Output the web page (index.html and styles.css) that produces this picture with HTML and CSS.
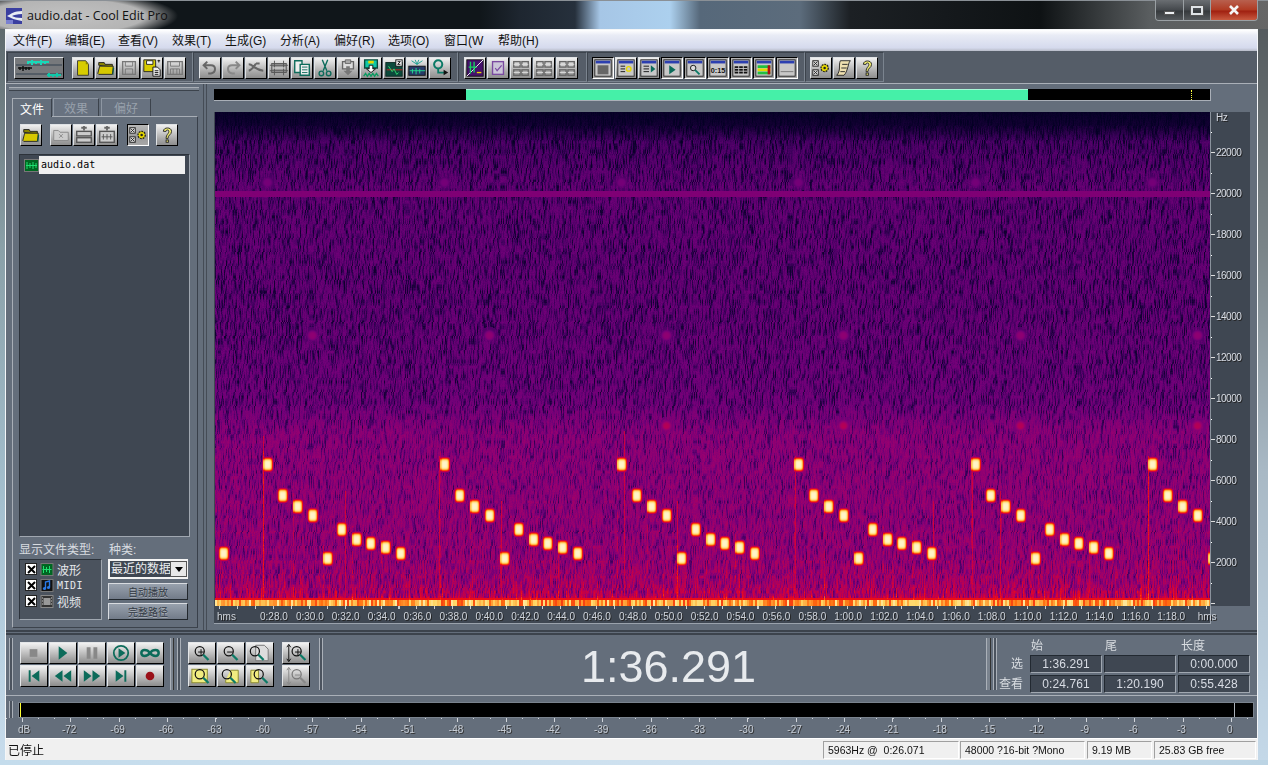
FILE: index.html
```html
<!DOCTYPE html>
<html lang="zh">
<head>
<meta charset="utf-8">
<title>audio.dat - Cool Edit Pro</title>
<link rel="stylesheet" href="styles.css">
</head>
<body>
<svg class="defs" width="0" height="0">
  <defs>
    <symbol id="mag" viewBox="0 0 22 22"><circle cx="9" cy="9" r="5.2" fill="none" stroke="#111" stroke-width="1.4"/><path d="M13 13l6 6" stroke="#0c7a66" stroke-width="2.6"/></symbol>
    <symbol id="maggray" viewBox="0 0 22 22"><circle cx="9" cy="9" r="5.2" fill="none" stroke="#777" stroke-width="1.4"/><path d="M13 13l6 6" stroke="#888" stroke-width="2.6"/></symbol>
    <symbol id="win" viewBox="0 0 22 22"><rect x="2" y="2" width="18" height="18" fill="#c8c8c8" stroke="#222"/><rect x="3" y="3" width="16" height="3" fill="#2c3fb0"/></symbol>
    <symbol id="grid" viewBox="0 0 22 22"><g fill="none" stroke="#666" stroke-width="1.5"><rect x="3" y="4" width="7" height="6"/><rect x="12" y="4" width="7" height="6"/><rect x="3" y="13" width="7" height="6"/><rect x="12" y="13" width="7" height="6"/></g><path d="M3 7h7M12 7h7M3 16h7M12 16h7" stroke="#ddd"/></symbol>
    <symbol id="gear" viewBox="0 0 22 22"><rect x="2" y="3" width="6" height="6" fill="#ddd" stroke="#222"/><path d="M3 4l4 4M7 4l-4 4" stroke="#222"/><rect x="2" y="13" width="6" height="6" fill="#ddd" stroke="#222"/><path d="M3 14l4 4M7 14l-4 4" stroke="#222"/><circle cx="15" cy="11" r="4" fill="#e6d800" stroke="#222" stroke-width="1.5" stroke-dasharray="2 1"/><circle cx="15" cy="11" r="1.4" fill="#222"/></symbol>
    <symbol id="help" viewBox="0 0 22 22"><path d="M7 7c0-5 9-5 9 0 0 4-4 3.500-4 8h-2c0-5 3-5 3-8 0-2-3-2-3 0z" fill="#f0ec70" stroke="#222"/><rect x="10" y="16.500" width="2.500" height="2.500" fill="#f0ec70" stroke="#222"/></symbol>
    <symbol id="folder" viewBox="0 0 22 22"><path d="M3 8V5h6l1 2h8v3z" fill="#8a8400" stroke="#222"/><path d="M2 17l2-8h15l-1 9H3z" fill="#d6c800" stroke="#222"/><path d="M18 18l1-8 1 1-1 8z" fill="#0c5a4a"/></symbol>
  </defs>
</svg>
<div class="screen">
  <header class="title">
    <svg class="appicon" width="16" height="16" viewBox="0 0 16 16"><rect width="16" height="16" fill="#3a3fa0"/><path d="M16 3C8 3 5 6 1 8c4 2 8 4 15 5v-3C11 10 8 9 6 8c2-1 5-2 10-2z" fill="#e8ecf4"/><rect y="12" width="7" height="4" fill="#7a80d0"/></svg>
    <span class="title-text">audio.dat - Cool Edit Pro</span>
    <div class="caption">
      <span class="cap cap-min"><i class="glyph-min"></i></span>
      <span class="cap cap-max"><i class="glyph-max"></i></span>
      <span class="cap cap-close"><svg width="12" height="10" viewBox="0 0 12 10"><path d="M2 1l8 8M10 1L2 9" stroke="#f4f4f4" stroke-width="2.600"/></svg></span>
    </div>
  </header>
  <div class="middle">
    <div class="edge-left"></div>
    <div class="client">
      <nav class="menu">
        <span>文件(F)</span><span>编辑(E)</span><span>查看(V)</span><span>效果(T)</span><span>生成(G)</span><span>分析(A)</span><span>偏好(R)</span><span>选项(O)</span><span>窗口(W</span><span>帮助(H)</span>
      </nav>
      <div class="toolbar">
        <div class="tg tg1">
          <button class="btn big"><svg width="48" height="20" viewBox="0 0 48 20"><rect width="48" height="20" fill="#77797c"/><path d="M1 7h46M1 16h46" stroke="#33414f"/><path d="M12 4h22M13 3v3M17 2v5M21 3v3M26 2v5M30 3v3" stroke="#19d8b8" stroke-width="2"/><path d="M3 10h14M5 9v3M8 8v5M11 9v3M14 9v3" stroke="#111" stroke-width="1.500"/><path d="M32 17h14M34 15v4M38 16v3M42 15v4" stroke="#10c8a8" stroke-width="2"/></svg></button>
          <div class="set">
            <button class="btn"><svg viewBox="0 0 22 22"><path d="M5 3h9l3 4v12H5z" fill="#d8cc00" stroke="#333"/><path d="M14 3v4h3z" fill="#8a8400"/></svg></button>
            <button class="btn"><svg><use href="#folder"/></svg></button>
            <button class="btn"><svg viewBox="0 0 22 22"><path d="M4 4h14v14H4z" fill="none" stroke="#777" stroke-width="1.500"/><path d="M7 4h8v5H7zM7 12h8v6H7z" fill="none" stroke="#777"/></svg></button>
            <button class="btn"><svg viewBox="0 0 22 22"><path d="M2 2h13v13H2z" fill="#d8cc00" stroke="#222"/><path d="M5 3h7v4H5z" fill="#fff" stroke="#222"/><path d="M12 10h5l3 3v7h-8z" fill="#eee" stroke="#111"/><path d="M14 14h4M14 16h4M14 18h4" stroke="#111"/><path d="M17 3h3M18.500 2v3" stroke="#111"/></svg></button>
            <button class="btn"><svg viewBox="0 0 22 22"><path d="M3 4h16v14H3z" fill="none" stroke="#777" stroke-width="1.500"/><path d="M6 4v5h10V4M6 18v-6h10v6M9 12v6M13 12v6" fill="none" stroke="#777"/></svg></button>
          </div>
        </div>
        <div class="tg tg2">
          <div class="set">
            <button class="btn"><svg viewBox="0 0 22 22"><path d="M8 4L4 8l4 4M4 8h8c6 0 6 8 0 9H9" fill="none" stroke="#666" stroke-width="2.200"/></svg></button>
            <button class="btn"><svg viewBox="0 0 22 22"><path d="M14 4l4 4-4 4M18 8h-8c-6 0-6 8 0 9h3" fill="none" stroke="#888" stroke-width="2.200"/></svg></button>
            <button class="btn"><svg viewBox="0 0 22 22"><path d="M3 7c5 0 6 6 16 7M3 14c4-1 6-5 8-8M11 6l4 0" fill="none" stroke="#666" stroke-width="2.200"/></svg></button>
            <button class="btn"><svg viewBox="0 0 22 22"><rect x="3" y="6" width="16" height="10" fill="#999" stroke="#555"/><path d="M6 3v16M16 3v16M1 8h20M1 14h20" stroke="#555"/><path d="M4 11h14" stroke="#eee"/></svg></button>
            <button class="btn"><svg viewBox="0 0 22 22"><path d="M3 3h8v13H3z" fill="#eee" stroke="#0c6b5a" stroke-width="1.500"/><path d="M9 7h10v12H9z" fill="#eee" stroke="#0c6b5a" stroke-width="1.500"/><path d="M11 10h6M11 13h6M11 16h6" stroke="#0c6b5a"/></svg></button>
            <button class="btn"><svg viewBox="0 0 22 22"><path d="M8 2l5 12M14 2L9 14" stroke="#0c6b5a" stroke-width="1.500"/><circle cx="7" cy="17" r="2.500" fill="none" stroke="#0c6b5a" stroke-width="1.500"/><circle cx="15" cy="17" r="2.500" fill="none" stroke="#0c6b5a" stroke-width="1.500"/></svg></button>
            <button class="btn"><svg viewBox="0 0 22 22"><path d="M5 4h12v8H5z" fill="#ddd" stroke="#666" stroke-width="1.500"/><path d="M8 2h6v4H8z" fill="#aaa" stroke="#666"/><path d="M9 9h4v5h3l-5 5-5-5h3z" fill="#777"/></svg></button>
            <button class="btn"><svg viewBox="0 0 22 22"><path d="M4 2h14v9H4z" fill="#0fc8a8" stroke="#0b4a3c" stroke-width="1.500"/><path d="M8 3h6v3H8z" fill="#e6d800"/><path d="M9 8h4v4h3l-5 4-5-4h3z" fill="#fff" stroke="#111"/><path d="M3 20l2-3 2 3 2-3 2 3 2-3 2 3 2-3 2 3" stroke="#0a9a60" fill="none" stroke-width="1.500"/></svg></button>
            <button class="btn"><svg viewBox="0 0 22 22"><rect x="2" y="5" width="18" height="15" fill="#0b4a3c" stroke="#0b2a24"/><path d="M3 13h17" stroke="#d02020"/><path d="M5 9l4 6 2-3 3 6 2-2" fill="none" stroke="#2fe070"/><rect x="13" y="2" width="7" height="7" fill="#eee" stroke="#111"/><path d="M15 4h3l-3 3h3" fill="none" stroke="#111"/></svg></button>
            <button class="btn"><svg viewBox="0 0 22 22"><rect x="2" y="9" width="18" height="10" fill="#263a68" stroke="#111"/><path d="M3 14h17M6 12v5M10 11v7M14 12v5" stroke="#22e090"/><path d="M9 2l2 5M13 2l-2 5M5 3l6 4M17 3l-6 4" stroke="#18a090"/></svg></button>
            <button class="btn"><svg viewBox="0 0 22 22"><circle cx="9" cy="7" r="4.500" fill="none" stroke="#0c7a66" stroke-width="2.200"/><path d="M9 12v4h8" fill="none" stroke="#0c7a66" stroke-width="2"/><path d="M15 13l5 3-5 3z" fill="#111"/></svg></button>
          </div>
        </div>
        <div class="tg tg3">
          <div class="set">
            <button class="btn"><svg viewBox="0 0 22 22"><rect x="2" y="2" width="18" height="18" fill="#46106c" stroke="#111"/><path d="M2 20L20 2" stroke="#fff"/><path d="M6 4v13M10 4v12M4 10h9" stroke="#14d060" stroke-width="1.500"/><path d="M13 16h5" stroke="#e6d800" stroke-width="1.500"/></svg></button>
            <button class="btn"><svg viewBox="0 0 22 22"><rect x="5" y="4" width="12" height="14" fill="#cbc6d8" stroke="#7a4aa0" stroke-width="1.500"/><path d="M8 11l2 3 5-6" stroke="#7a4aa0" fill="none" stroke-width="1.300"/></svg></button>
            <button class="btn"><svg><use href="#grid"/></svg></button>
            <button class="btn"><svg><use href="#grid"/></svg></button>
            <button class="btn"><svg><use href="#grid"/></svg></button>
          </div>
        </div>
        <div class="tg tg4">
          <div class="set">
            <button class="btn on"><svg viewBox="0 0 22 22"><use href="#win" width="22" height="22"/><path d="M5 8h12v10H5z" fill="#666"/></svg></button>
            <button class="btn"><svg viewBox="0 0 22 22"><use href="#win" width="22" height="22"/><path d="M5 9h5M5 12h5M5 15h5" stroke="#111"/><circle cx="14" cy="12" r="2.500" fill="none" stroke="#e6d800" stroke-width="1.500"/></svg></button>
            <button class="btn"><svg viewBox="0 0 22 22"><use href="#win" width="22" height="22"/><path d="M5 9h6M5 12h6M5 15h6" stroke="#111"/><path d="M13 8l5 4-5 4z" fill="#0c6b5a"/></svg></button>
            <button class="btn on"><svg viewBox="0 0 22 22"><use href="#win" width="22" height="22"/><path d="M8 8l7 5-7 5z" fill="#0c6b5a"/></svg></button>
            <button class="btn on"><svg viewBox="0 0 22 22"><use href="#win" width="22" height="22"/><circle cx="9" cy="11" r="3" fill="#ddd" stroke="#111"/><path d="M11 13l5 5" stroke="#0c7a66" stroke-width="2"/></svg></button>
            <button class="btn on"><svg viewBox="0 0 22 22"><use href="#win" width="22" height="22"/><text x="11" y="17" class="svgt">0:15</text></svg></button>
            <button class="btn on"><svg viewBox="0 0 22 22"><use href="#win" width="22" height="22"/><path d="M4 9h4v8H4zM9 9h4v8H9zM14 9h4v8h-4z" fill="#111"/><path d="M4 11.500h14M4 14.500h14" stroke="#ccc"/></svg></button>
            <button class="btn on"><svg viewBox="0 0 22 22"><use href="#win" width="22" height="22"/><rect x="4" y="8" width="14" height="3" fill="#20c040"/><rect x="4" y="11.500" width="14" height="3" fill="#e6d800"/><rect x="4" y="15" width="14" height="3" fill="#20c040"/><path d="M15 8h3v10h-3z" fill="#b01010"/></svg></button>
            <button class="btn on"><svg viewBox="0 0 22 22"><use href="#win" width="22" height="22"/><path d="M4 15h14" stroke="#777"/></svg></button>
          </div>
        </div>
        <div class="tg tg5">
          <div class="set">
            <button class="btn"><svg><use href="#gear"/></svg></button>
            <button class="btn"><svg viewBox="0 0 22 22"><path d="M7 3h11c-2 2-2 5-3 8s-2 6-4 8H3c2-2 3-5 3-8s0-6 1-8z" fill="#efe0b0" stroke="#222"/><path d="M9 7h6M8 11h6M7 15h5" stroke="#222"/></svg></button>
            <button class="btn"><svg><use href="#help"/></svg></button>
          </div>
        </div>
      </div>
      <div class="main">
        <aside class="left">
          <div class="hgrip"></div>
          <div class="tabs">
            <span class="tab tab-on">文件</span><span class="tab tab-b">效果</span><span class="tab tab-c">偏好</span>
          </div>
          <div class="panel">
            <div class="panel-tools">
              <button class="btn"><svg><use href="#folder"/></svg></button>
              <div class="set ml8">
                <button class="btn"><svg viewBox="0 0 22 22"><path d="M3 17V6h5l2 2h9v9z" fill="#ccc" stroke="#888"/><path d="M9 10l4 4M13 10l-4 4" stroke="#888"/></svg></button>
                <button class="btn"><svg viewBox="0 0 22 22"><path d="M8 3h6M11 1v5" stroke="#666" stroke-width="2"/><rect x="3" y="7" width="16" height="5" fill="#ccc" stroke="#555" stroke-width="1.500"/><rect x="3" y="14" width="16" height="5" fill="#ccc" stroke="#555" stroke-width="1.500"/></svg></button>
                <button class="btn"><svg viewBox="0 0 22 22"><path d="M8 3h6M11 1v5" stroke="#666" stroke-width="2"/><rect x="3" y="7" width="16" height="12" fill="#ccc" stroke="#555" stroke-width="1.500"/><path d="M5 13h12M7 10v6M11 10v6M15 10v6" stroke="#555"/></svg></button>
              </div>
              <button class="btn on ml9"><svg><use href="#gear"/></svg></button>
              <button class="btn ml7"><svg><use href="#help"/></svg></button>
            </div>
            <div class="filelist">
              <div class="file">
                <svg class="wave" width="15" height="13" viewBox="0 0 15 13"><rect x=".5" y=".5" width="14" height="12" fill="#062" stroke="#777"/><path d="M2 6.500h11M3 3v7M6 4v5M9 3v7M12 4v5" stroke="#1ee070"/></svg>
                <span class="file-name">audio.dat</span>
              </div>
            </div>
            <div class="type-labels"><span class="lab-a">显示文件类型:</span><span>种类:</span></div>
            <div class="types">
              <div class="typebox">
                <div class="trow"><span class="chk"><svg width="9" height="9" viewBox="0 0 9 9"><path d="M1 1l7 7M8 1L1 8" stroke="#000" stroke-width="2"/></svg></span><svg class="ficon" width="14" height="13" viewBox="0 0 13 13"><rect x=".5" y=".5" width="12" height="12" fill="#062" stroke="#777"/><path d="M2 6.500h9M3 3v7M6 4v5M9 3v7" stroke="#1ee070"/></svg><span class="tname">波形</span></div>
                <div class="trow"><span class="chk"><svg width="9" height="9" viewBox="0 0 9 9"><path d="M1 1l7 7M8 1L1 8" stroke="#000" stroke-width="2"/></svg></span><svg class="ficon" width="14" height="13" viewBox="0 0 13 13"><rect x=".5" y=".5" width="12" height="12" fill="#111" stroke="#777"/><path d="M5 9V3l4-1v6" fill="none" stroke="#2a7ae8" stroke-width="1.400"/><circle cx="4" cy="9.500" r="1.600" fill="#2a7ae8"/><circle cx="8" cy="8.500" r="1.600" fill="#2a7ae8"/></svg><span class="tname mono">MIDI</span></div>
                <div class="trow"><span class="chk"><svg width="9" height="9" viewBox="0 0 9 9"><path d="M1 1l7 7M8 1L1 8" stroke="#000" stroke-width="2"/></svg></span><svg class="ficon" width="14" height="13" viewBox="0 0 13 13"><rect x=".5" y=".5" width="12" height="12" fill="#333" stroke="#888"/><rect x="3" y="3" width="7" height="7" fill="#999"/><path d="M1.500 3h1M1.500 6h1M1.500 9h1M10.500 3h1M10.500 6h1M10.500 9h1" stroke="#ccc"/></svg><span class="tname">视频</span></div>
              </div>
              <div class="typeside">
                <div class="combo"><span class="combo-text">最近的数据</span><span class="combo-btn"><i class="arrow"></i></span></div>
                <button class="plain">自动播放</button>
                <button class="plain">完整路径</button>
              </div>
            </div>
          </div>
        </aside>
        <section class="center">
          <div class="overview"><div class="ov-green"></div><div class="ov-mark"></div></div>
          <div class="specrow">
            <canvas id="spec" class="spec" width="995" height="494"></canvas>
            <div class="hz">
              <span class="hz-top">Hz</span>
              <span>22000</span><span>20000</span><span>18000</span><span>16000</span><span>14000</span><span>12000</span><span>10000</span><span>8000</span><span>6000</span><span>4000</span><span>2000</span>
            </div>
          </div>
          <div class="timeruler">
            <span class="hms">hms</span><span>0:28.0</span><span>0:30.0</span><span>0:32.0</span><span>0:34.0</span><span>0:36.0</span><span>0:38.0</span><span>0:40.0</span><span>0:42.0</span><span>0:44.0</span><span>0:46.0</span><span>0:48.0</span><span>0:50.0</span><span>0:52.0</span><span>0:54.0</span><span>0:56.0</span><span>0:58.0</span><span>1:00.0</span><span>1:02.0</span><span>1:04.0</span><span>1:06.0</span><span>1:08.0</span><span>1:10.0</span><span>1:12.0</span><span>1:14.0</span><span>1:16.0</span><span>1:18.0</span><span>hms</span>
          </div>
        </section>
      </div>
      <div class="transport">
        <div class="ctl ctl1">
          <div class="vgrip"></div>
          <div class="keys">
            <button class="key"><svg viewBox="0 0 27 20"><rect x="9" y="6" width="8" height="8" fill="#888"/></svg></button>
            <button class="key"><svg viewBox="0 0 27 20"><path d="M9 3l9 7-9 7z" fill="#0c6b5a"/></svg></button>
            <button class="key"><svg viewBox="0 0 27 20"><path d="M8 4h4v12H8zM15 4h4v12h-4z" fill="#888"/></svg></button>
            <button class="key"><svg viewBox="0 0 27 20"><circle cx="13.500" cy="10" r="7.500" fill="none" stroke="#0c6b5a" stroke-width="1.800"/><path d="M11 5l7 5-7 5z" fill="#0c6b5a"/></svg></button>
            <button class="key"><svg viewBox="0 0 27 20"><path d="M13.500 10c-3-4-9-4-9 0s6 4 9 0 9-4 9 0-6 4-9 0z" fill="none" stroke="#0c6b5a" stroke-width="2.600"/></svg></button>
            <button class="key"><svg viewBox="0 0 27 20"><path d="M8 4h2v12H8zM19 4l-8 6 8 6z" fill="#0c6b5a"/></svg></button>
            <button class="key"><svg viewBox="0 0 27 20"><path d="M13 4l-8 6 8 6zM22 4l-8 6 8 6z" fill="#0c6b5a"/></svg></button>
            <button class="key"><svg viewBox="0 0 27 20"><path d="M5 4l8 6-8 6zM14 4l8 6-8 6z" fill="#0c6b5a"/></svg></button>
            <button class="key"><svg viewBox="0 0 27 20"><path d="M8 4l8 6-8 6zM17 4h2v12h-2z" fill="#0c6b5a"/></svg></button>
            <button class="key"><svg viewBox="0 0 27 20"><circle cx="13.500" cy="10" r="4.500" fill="#9a1018"/></svg></button>
          </div>
          <div class="vgrip single"></div>
        </div>
        <div class="ctl ctl2">
          <div class="vgrip"></div>
          <div class="keys">
            <button class="key"><svg viewBox="0 0 27 20"><use href="#mag" x="3" width="20" height="20"/><path d="M9.500 9h6M12.500 6v6" stroke="#111"/></svg></button>
            <button class="key"><svg viewBox="0 0 27 20"><use href="#mag" x="3" width="20" height="20"/><path d="M9.500 9h6" stroke="#111"/></svg></button>
            <button class="key"><svg viewBox="0 0 27 20"><path d="M9 2h9l4 4v12H9z" fill="#ddd" stroke="#777"/><use href="#mag" x="0" width="20" height="20"/></svg></button>
            <button class="key"><svg viewBox="0 0 27 20"><rect x="3" y="3" width="16" height="14" fill="#f0ec80" stroke="#8a8a30"/><use href="#mag" x="3" width="20" height="20"/></svg></button>
            <button class="key"><svg viewBox="0 0 27 20"><path d="M13 4h8v13h-13v-3" fill="#f0ec80" stroke="#8a8a30"/><use href="#mag" x="1" width="20" height="20"/></svg></button>
            <button class="key"><svg viewBox="0 0 27 20"><path d="M4 4h8v13H4z" fill="#f0ec80" stroke="#8a8a30"/><use href="#mag" x="4" width="20" height="20"/></svg></button>
          </div>
          <div class="keys narrow">
            <button class="key"><svg viewBox="0 0 27 20"><path d="M6 2v16M4 4l2-3 2 3M4 16l2 3 2-3" fill="none" stroke="#111"/><use href="#mag" x="6" width="20" height="20"/><path d="M12.500 9h6M15.500 6v6" stroke="#111"/></svg></button>
            <button class="key"><svg viewBox="0 0 27 20"><path d="M6 2v16M4 4l2-3 2 3M4 16l2 3 2-3" fill="none" stroke="#888"/><use href="#maggray" x="6" width="20" height="20"/><path d="M12.500 9h6" stroke="#888"/></svg></button>
          </div>
          <div class="vgrip"></div>
        </div>
        <div class="clock">1:36.291</div>
        <div class="ctl ctl4">
          <div class="vgrip thick"></div>
          <div class="vgrip"></div>
          <div class="times">
            <span class="th th1">始</span><span class="th th2">尾</span><span class="th th3">长度</span>
            <span class="rh">选</span><span class="tf">1:36.291</span><span class="tf"></span><span class="tf">0:00.000</span>
            <span class="rh">查看</span><span class="tf">0:24.761</span><span class="tf">1:20.190</span><span class="tf">0:55.428</span>
          </div>
        </div>
      </div>
      <div class="meter">
        <div class="meter-row">
          <div class="vgrip"></div>
          <div class="meter-bar"><i class="m-yellow"></i><i class="m-zero"></i></div>
        </div>
        <div class="db">
          <span class="db0">dB</span><span>-72</span><span>-69</span><span>-66</span><span>-63</span><span>-60</span><span>-57</span><span>-54</span><span>-51</span><span>-48</span><span>-45</span><span>-42</span><span>-39</span><span>-36</span><span>-33</span><span>-30</span><span>-27</span><span>-24</span><span>-21</span><span>-18</span><span>-15</span><span>-12</span><span>-9</span><span>-6</span><span>-3</span><span>0</span>
        </div>
      </div>
      <footer class="status">
        <span class="st-main">已停止</span>
        <span class="st st-a">5963Hz @&nbsp;&nbsp;0:26.071</span>
        <span class="st st-b">48000 ?16-bit ?Mono</span>
        <span class="st st-c">9.19 MB</span>
        <span class="st st-d">25.83 GB free</span>
      </footer>
    </div>
    <div class="edge-right"></div>
  </div>
  <div class="edge-bottom"></div>
</div>
<script src="script.js"></script>
</body>
</html>
```
FILE: styles.css
```css
* { box-sizing: border-box; }
html, body { margin: 0; padding: 0; }
body { width: 1268px; height: 765px; overflow: hidden; background: #20262a; font-family: "Liberation Sans", "Noto Sans CJK SC", sans-serif; font-size: 12px; }
.defs { position: absolute; }
.screen { width: 1268px; height: 765px; display: flex; flex-direction: column; }

.title { height: 29px; display: flex; align-items: center; padding-left: 6px; border-top: 1px solid #8a9096;
  background:
    radial-gradient(ellipse 112px 24px at 66px 15px, #c2c2c2 0, #b4b4b4 70%, rgba(150,150,150,.55) 86%, rgba(60,60,60,0) 100%),
    linear-gradient(90deg, #10161a 0, #10161a 480px, #1e2630 520px, #26303c 575px, #a6c6e6 600px, #acd0ee 670px, #56687a 700px, #5c6c7c 800px, #1c2024 850px, #0e1214 1040px, #5a5e60 1150px, #666 1268px);
}
.appicon { flex: none; margin-top: 1px; }
.title-text { margin-left: 5px; font-family: "Open Sans", sans-serif; font-size: 12.5px; color: #111; }
.caption { margin-left: auto; margin-right: 10px; align-self: flex-start; margin-top: -1px; display: flex; height: 21px; border: 1px solid #9aa0a4; border-top: 0; border-radius: 0 0 4px 4px; overflow: hidden; }
.cap { display: flex; align-items: center; justify-content: center; border-right: 1px solid #9aa0a4; background: linear-gradient(#6a6e72, #44484c 50%, #35393c 55%, #55595c); }
.cap-min { width: 28px; }
.cap-max { width: 27px; }
.cap-close { width: 46px; border-right: 0; background: linear-gradient(#b8604e, #b03a22 50%, #a02010 55%, #c85a40); }
.glyph-min { width: 11px; height: 4px; margin-top: 6px; background: #eceff2; border: 1px solid #555; }
.glyph-max { width: 12px; height: 9px; border: 2px solid #dfe3e6; outline: 1px solid #555; }

.middle { flex: none; height: 731px; display: flex; }
.edge-left { width: 5px; background: linear-gradient(#5f6a6e, #8aa0a8 30%, #a8c4d4 70%, #c8dcec); }
.edge-right { width: 10px; background: linear-gradient(#555b5e, #7a8488 30%, #a8b8c4 60%, #c4d8e8); }
.edge-bottom { flex: 1; background: linear-gradient(90deg, #c4dcec, #d0e2f0 60%, #bcd4e4); }

.client { width: 1253px; display: flex; flex-direction: column; border: 1px solid #f4f6f8; border-bottom: 0; background: #646e7b; }

.menu { height: 21px; display: flex; align-items: center; padding: 0 0 2px 7px; background: linear-gradient(#fff, #e8ebf5 25%, #d5daed 85%, #b8bcc8); font-size: 12px; color: #111; }
.menu span { width: 54px; flex: none; white-space: nowrap; }
.menu span:nth-child(1) { width: 52px; }
.menu span:nth-child(2), .menu span:nth-child(4) { width: 53px; }
.menu span:nth-child(5) { width: 55px; }
.menu span:nth-child(8) { width: 56px; }

.btn { width: 22px; height: 22px; flex: none; padding: 0; display: block; border: 1px solid; border-color: #dfe2e5 #000 #000 #dfe2e5; background: linear-gradient(#f0f0f0, #d2d2d2 30%, #a8a8a8 70%, #8e8e8e); }
.btn svg { display: block; width: 20px; height: 20px; }
.btn.on { border-color: #000 #fff #fff #000; background: linear-gradient(#b8b8b8, #9a9a9a 60%, #a8a8a8); }
.btn.big { width: 50px; margin-right: 8px; }
.btn.big svg { width: 48px; }
.svgt { font: bold 8px "Liberation Sans", sans-serif; text-anchor: middle; fill: #111; }
.set { display: flex; gap: 1px; }

.toolbar { height: 33px; flex: none; display: flex; background: #555d68; border-bottom: 1px solid #aab0b8; padding: 1px 0 0 1px; }
.tg { height: 30px; display: flex; padding-top: 4px; border: 1px solid #3c434c; border-right-color: #7b848f; border-bottom-color: #7b848f; }
.tg1 { width: 186px; padding-left: 6px; }
.tg2 { width: 265px; padding-left: 5px; }
.tg3 { width: 129px; padding-left: 5px; }
.tg4 { width: 218px; padding-left: 4px; }
.tg5 { width: 79px; padding-left: 4px; }

.main { height: 546px; flex: none; display: flex; }
.left { width: 201px; flex: none; padding-top: 3px; border-right: 4px double #454c56; background: #646e7b; }
.hgrip { height: 4px; margin: 0 4px 7px 3px; border-top: 1px solid #a8aeb6; border-bottom: 1px solid #3c434c; background: #7a838e; }
.tabs { height: 18px; display: flex; margin-left: 6px; }
.tab { display: flex; align-items: center; justify-content: center; color: #98a1ac; background: #687280; border: 1px solid #3c434c; border-bottom: 0; border-top-color: #8d96a2; border-left-color: #8d96a2; }
.tab-on { width: 40px; color: #fff; background: #646e7b; border-color: #a8aeb6 #3c434c transparent #a8aeb6; height: 19px; position: relative; z-index: 1; }
.tab-b { width: 46px; margin-left: 1px; }
.tab-c { width: 50px; margin-left: 2px; }
.panel { width: 186px; height: 512px; margin-left: 6px; padding: 7px 6px 0; border: 1px solid #3c434c; border-top-color: #a8aeb6; border-left-color: #a8aeb6; border-right-color: #39404a; }
.panel-tools { display: flex; height: 22px; padding-left: 1px; }
.ml8 { margin-left: 8px; }
.ml9 { margin-left: 9px; }
.ml7 { margin-left: 7px; }
.filelist { width: 171px; height: 383px; margin-top: 8px; padding: 1px 4px 0 4px; background: #3f4752; border: 1px solid; border-color: #2c323a #a0a7b0 #a0a7b0 #2c323a; }
.file { display: flex; align-items: center; height: 18px; }
.wave { flex: none; }
.file-name { flex: 1; height: 18px; margin-left: 0; padding-left: 2px; line-height: 18px; background: #f0f0f0; color: #000; font-family: "DejaVu Sans Mono", monospace; font-size: 10px; }
.type-labels { display: flex; margin-top: 6px; height: 16px; color: #d8dce0; line-height: 14px; }
.lab-a { width: 90px; }
.types { display: flex; }
.typebox { width: 83px; height: 61px; padding: 1px 0 0 5px; background: #4b535e; border: 1px solid; border-color: #2c323a #a0a7b0 #a0a7b0 #2c323a; }
.trow { height: 16px; display: flex; align-items: center; }
.chk { width: 12px; height: 12px; display: flex; align-items: center; justify-content: center; background: #fff; border: 1px solid #222; }
.ficon { margin-left: 3px; flex: none; }
.tname { margin-left: 3px; color: #e4e6ea; }
.mono { font-family: "DejaVu Sans Mono", monospace; font-size: 10px; letter-spacing: .5px; }
.typeside { width: 80px; margin-left: 6px; display: flex; flex-direction: column; }
.combo { height: 20px; display: flex; border: 2px solid #f4f4f4; border-right-width: 1px; background: #3f4752; overflow: hidden; }
.combo-text { flex: 1; overflow: hidden; white-space: nowrap; color: #eceef0; padding-left: 1px; line-height: 16px; }
.combo-btn { width: 17px; flex: none; display: flex; align-items: center; justify-content: center; background: #e8e8e8; border: 1px solid #555; }
.arrow { border: 4px solid transparent; border-top: 5px solid #000; border-bottom: 0; }
.plain { height: 17px; margin-top: 4px; padding: 0; font: 10px "Liberation Sans", "Noto Sans CJK SC", sans-serif; color: #333a44; text-shadow: 0 1px 0 #aab0b8; background: linear-gradient(#98a1ad, #727b89); border: 1px solid; border-color: #d8dbe0 #22282e #22282e #d8dbe0; }
.plain + .plain { margin-top: 3px; }

.center { flex: 1; min-width: 0; padding: 5px 0 0 7px; }
.overview { width: 997px; height: 12px; margin-bottom: 11px; display: flex; position: relative; background: #000; border-right: 1px solid #aab0b8; border-bottom: 1px solid #aab0b8; }
.ov-green { width: 562px; height: 100%; margin-left: 252px; background: #45f0a8; border-top: 1px solid #a8f8d8; }
.ov-mark { position: absolute; right: 18px; top: 1px; height: 10px; border-left: 1px dotted #ffff40; }
.specrow { display: flex; width: 1036px; height: 494px; padding-left: 1px; background: #3f4752; }
.spec { display: block; flex: none; width: 995px; height: 494px; }
.hz { width: 40px; flex: none; color: #d8dce4; font-size: 10px; line-height: 12px; letter-spacing: -.5px; text-shadow: 1px 1px 0 #222; display: flex; flex-direction: column; border-left: 1px solid #8a929c;
  background:
    repeating-linear-gradient(transparent 0 20px, #fff 20px 21px, transparent 21px 41px) 0 0 / 1px 100% no-repeat,
    repeating-linear-gradient(transparent 0 40px, #ddd 40px 41px) 0 0 / 4px 100% no-repeat; }
.hz span { height: 41px; flex: none; padding: 0 0 0 5px; }
.hz .hz-top { height: 35px; }
.timeruler { width: 997px; height: 18px; display: flex; padding-top: 5px; color: #d0d5dc; font-size: 10px; line-height: 11px; text-shadow: 1px 1px 0 #222; background: #3f4752 repeating-linear-gradient(90deg, #c8ccd2 0 1px, transparent 1px 17.95px) 5px 0 / 100% 3px no-repeat; border-right: 1px solid #9aa2ac; border-bottom: 1px solid #9aa2ac; }
.timeruler span { width: 35.9px; flex: none; text-align: center; white-space: nowrap; }
.timeruler .hms { width: 42px; padding-left: 3px; text-align: left; }
.timeruler .hms:last-child { width: 20px; padding: 0; margin-left: 2px; }

.transport { height: 66px; flex: none; display: flex; border-top: 5px double #3c434c; outline: 0; background: #646e7b; border-bottom: 1px solid #aab0b8; padding-top: 1px; }
.ctl { display: flex; align-items: stretch; height: 58px; padding-top: 2px; }
.ctl1 { width: 170px; padding-left: 3px; }
.ctl2 { width: 147px; padding-left: 1px; }
.ctl4 { width: 273px; padding-left: 2px; }
.vgrip { width: 4px; height: 52px; flex: none; border-left: 1px solid #aab0b8; border-right: 1px solid #aab0b8; background: #4b535e; margin-right: 7px; }
.vgrip.single { width: 4px; margin: 0 0 0 5px; background: #7a838e; border-right-color: #333; }
.vgrip.thick { width: 5px; margin-right: 2px; background: #7a838e; border-right-color: #333; }
.keys { display: grid; grid-template-columns: repeat(5, 29px); grid-auto-rows: 22px; align-content: start; gap: 1px 0; padding-top: 4px; }
.ctl2 .keys { grid-template-columns: repeat(3, 29px); margin-right: 7px; }
.ctl2 .keys.narrow { grid-template-columns: 28px; margin-right: 9px; }
.key { width: 28px; height: 22px; padding: 0; border: 1px solid; border-color: #e4e6e8 #000 #000 #e4e6e8; background: linear-gradient(#f2f2f2, #cfcfcf 35%, #a6a6a6 75%, #8c8c8c); }
.key svg { display: block; width: 26px; height: 20px; }
.clock { flex: 1; text-align: center; font-size: 45px; line-height: 62px; color: #e8ebee; padding-left: 30px; }
.times { flex: 1; display: grid; grid-template-columns: 37px 72px 72px 72px; grid-template-rows: 14px 18px 18px; column-gap: 2px; row-gap: 2px; color: #d8dce0; font-size: 12px; line-height: 14px; margin-top: 1px; margin-left: -13px; }
.th { text-align: center; font-size: 12px; }
.th1 { grid-column: 2; justify-self: start; padding-left: 1px; }
.th2 { justify-self: start; padding-left: 1px; }
.th3 { justify-self: start; padding-left: 3px; }
.rh { text-align: right; line-height: 18px; padding-right: 5px; }
.tf { height: 18px; text-align: center; font-size: 12px; line-height: 17px; letter-spacing: .1px; background: #3f4752; border: 1px solid; border-color: #222931 #a0a7b0 #a0a7b0 #222931; color: #d8dce4; }

.meter { height: 42px; flex: none; background: #646e7b; padding-top: 5px; }
.meter-row { display: flex; height: 17px; padding-left: 3px; }
.meter-row .vgrip { height: 17px; margin-right: 5px; }
.meter-bar { width: 1236px; height: 16px; margin-top: 1px; position: relative; background: #000; border: 1px solid #7a838e; }
.m-yellow { position: absolute; left: 1px; top: 0; bottom: 0; width: 1px; background: #ffff30; }
.m-zero { position: absolute; left: 1215px; top: 0; bottom: 0; width: 1px; background: #aab0b8; }
.db { height: 20px; display: flex; padding: 6px 0 0 12px; font-size: 10px; line-height: 12px; color: #c8ced6; text-shadow: 1px 1px 0 #333;
  background:
    repeating-linear-gradient(90deg, #d0d4da 0 1px, transparent 1px 16.12px) 0 0 / 100% 1px no-repeat,
    repeating-linear-gradient(90deg, #d0d4da 0 1px, transparent 1px 48.36px) 16px 0 / 100% 4px no-repeat; }
.db span { width: 48.36px; flex: none; text-align: center; }
.db .db0 { width: 27px; text-align: left; }

.status { height: 22px; flex: none; display: flex; align-items: center; background: #f0f0f0; color: #111; font-size: 12px; padding-left: 2px; border-top: 1px solid #fff; }
.st-main { width: 815px; }
.st { height: 18px; font-size: 10.5px; line-height: 17px; padding-left: 4px; border: 1px solid; border-color: #a0a0a0 #fff #fff #a0a0a0; white-space: nowrap; }
.st-a { width: 136px; }
.st-b { width: 125px; margin-left: 1px; }
.st-c { width: 65px; margin-left: 2px; }
.st-d { width: 102px; margin-left: 2px; }
```
FILE: script.js
```js
(function () {
  var c = document.getElementById('spec'), g = c.getContext('2d');
  var W = c.width, H = c.height, OX = 215, OY = 112;
  var seed = 12345;
  function r() { seed = (seed * 1664525 + 1013904223) >>> 0; return seed / 4294967296; }

  var stops = [[0,4,0,36],[.12,20,0,52],[.3,66,0,96],[.45,112,0,120],[.6,150,0,112],[.72,205,0,64],[.8,240,16,16],[.88,255,112,16],[.95,255,214,100],[1,255,244,200]];
  function color(v) {
    v = Math.max(0, Math.min(1, v));
    for (var i = 1; i < stops.length; i++) {
      if (v <= stops[i][0]) {
        var a = stops[i - 1], b = stops[i], t = (v - a[0]) / (b[0] - a[0]);
        return [a[1] + (b[1] - a[1]) * t, a[2] + (b[2] - a[2]) * t, a[3] + (b[3] - a[3]) * t];
      }
    }
    return [255, 244, 200];
  }
  var bp = [[0,.02],[12,.07],[30,.26],[70,.33],[200,.34],[290,.38],[320,.49],[440,.54],[470,.57],[484,.62],[490,.7],[494,.72]];
  function base(y) {
    for (var i = 1; i < bp.length; i++) if (y <= bp[i][0]) {
      var a = bp[i - 1], b = bp[i];
      return a[1] + (b[1] - a[1]) * (y - a[0]) / (b[0] - a[0]);
    }
    return .72;
  }

  var phrase = [[0,0],[15,31],[30,42],[45,51],[60,94],[74,65],[89,75],[103,79],[118,83],[133,89]];
  var starts = [267, 444, 621, 798, 975, 1152];
  var blobs = [[223, 553]];
  starts.forEach(function (s) {
    phrase.forEach(function (p) { blobs.push([s + p[0], 464 + p[1]]); });
  });
  var strong = [[263,435],[345,490],[439,455],[501,500],[624,430],[677,500],[795,455],[933,500],[972,460],[1000,490],[1148,455]];
  var faint = [];
  starts.forEach(function (s, i) {
    faint.push([s, 182, .14]);
    faint.push([s + 45, 335, .22]);
    if (i > 1) faint.push([s + 45, 425, .2]);
  });

  var ROW = 5, rows = Math.ceil(H / ROW) + 2;
  var field = new Float32Array(W * rows);
  for (var k = 0; k < field.length; k++) { var q = r(); field[k] = 1 - q * q * q; }
  var line = new Float32Array(W);
  var band = new Float32Array(W);
  for (var x0 = 0; x0 < W; x0++) {
    line[x0] = r();
    if (x0 % 2 === 0) band[x0] = r(); else band[x0] = band[x0 - 1];
  }

  var img = g.createImageData(W, H), d = img.data;
  for (var y = 0; y < H; y++) {
    var b = base(y), fy = y / ROW + (y * 7 % 3) * .1, y0 = Math.floor(fy), t = fy - y0;
    for (var x = 0; x < W; x++) {
      var slant = Math.floor(y / 14 + (x >> 5) % 3);
      var xs = (x + slant) % W;
      var n = field[xs + y0 * W] * (1 - t) + field[xs + (y0 + 1) * W] * t;
      var amp = y < 30 ? y / 30 * .3 + .05 : .36;
      var v = b + (n - .75) * amp + (r() - .5) * .05;
      var ax = x + OX, ay = y + OY;

      if (y > 78 && y < 85) v = Math.max(v, .51 + (r() - .5) * .02);
      if (y > 440) v += line[x] * line[x] * line[x] * (y - 440) / 54 * .14;

      for (var f = 0; f < faint.length; f++) {
        var F = faint[f], fx = (ax - F[0]) / 5, fz = (ay - F[1]) / 5;
        var rr = fx * fx + fz * fz;
        if (rr < 3) v = Math.max(v, b + F[2] * Math.exp(-rr * rr));
      }
      for (var s = 0; s < strong.length; s++) {
        if (ax === strong[s][0] && ay > strong[s][1]) v = Math.max(v, .72 + (r() - .5) * .06);
      }
      for (var i = 0; i < blobs.length; i++) {
        var B = blobs[i], dx = ax - B[0], dy = ay - B[1];
        if (dx > -9 && dx < 10 && dy > -11 && dy < 11) {
          var ex = dx > 0 ? dx / 5.5 : dx / 4.8, ey = dy / 7;
          v = Math.max(v, 1 - .28 * (ex * ex * ex * ex + ey * ey * ey * ey));
        }
        if (ax === B[0] - 4 && ay > B[1] - 14 && i % 2 === 1) v += .07;
      }

      if (y >= 486) {
        if (y >= 488) v = .84 + band[x] * .14;
        else v = Math.max(v, .79);
      }
      var rgb = color(v), p = (x + y * W) * 4;
      d[p] = rgb[0]; d[p + 1] = rgb[1]; d[p + 2] = rgb[2]; d[p + 3] = 255;
    }
  }
  g.putImageData(img, 0, 0);
})();
```
